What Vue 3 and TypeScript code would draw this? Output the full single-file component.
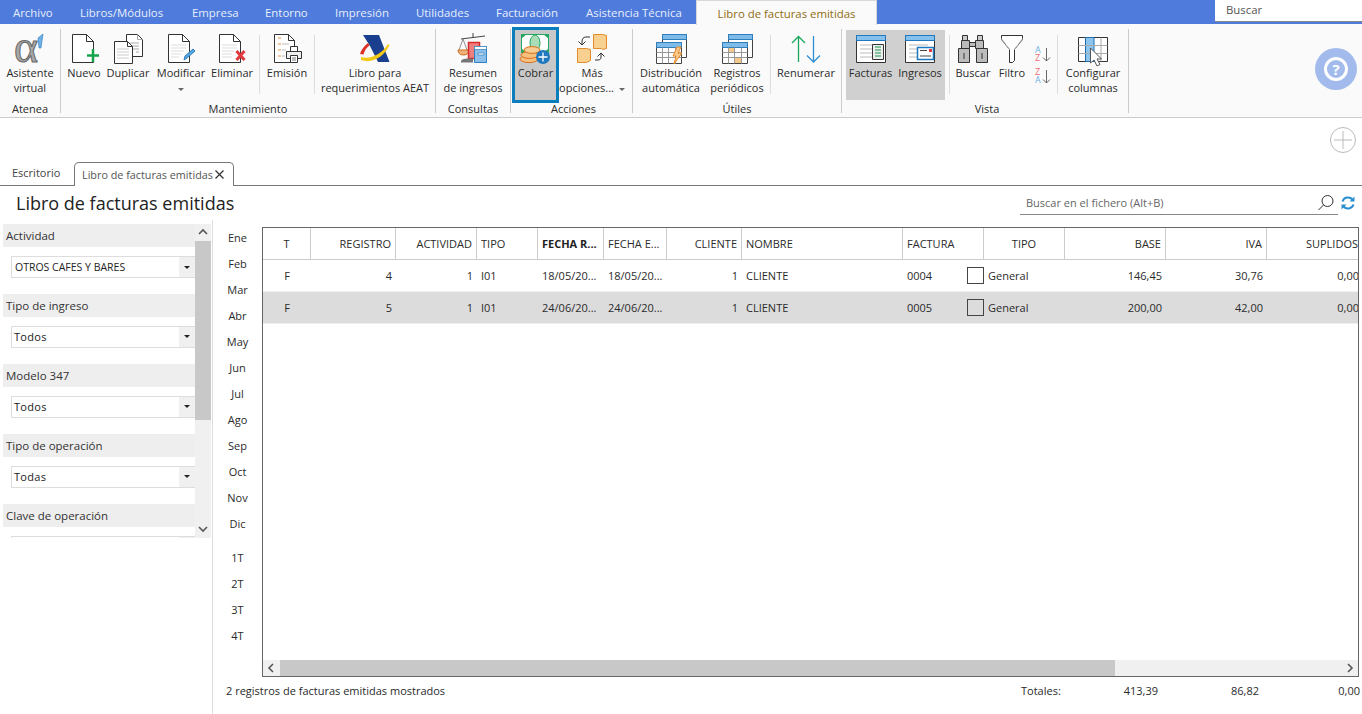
<template>
  <div class="app">
    <div class="menubar">
      <span v-for="m in menu" :key="m.label" class="menu-item" :style="{ width: m.width + 'px' }">{{ m.label }}</span>
      <span class="menu-active">Libro de facturas emitidas</span>
      <div class="global-search">Buscar</div>
    </div>

    <div class="ribbon">
      <div v-for="g in groups" :key="g.label" class="group" :style="{ width: g.width + 'px', paddingLeft: (g.pad || 0) + 'px' }">
        <div class="group-row">
          <template v-for="(b, i) in g.items" :key="i">
            <div v-if="b.sep !== undefined" class="sep" :style="{ marginLeft: b.sep + 'px' }"></div>
            <div v-else class="btn" :class="{ on: b.on, focus: b.focus }" :style="{ width: b.w + 'px' }">
              <svg v-if="b.icon === 'sort'" class="ico-sort" width="24" height="42" viewBox="0 0 24 42">
                <text x="5" y="9" class="az blue">A</text>
                <text x="5" y="17" class="az red">Z</text>
                <path d="M16.500 4v13M13 13.500l3.500 3.500 3.500-3.500" fill="none" stroke="#666" />
                <text x="5" y="31" class="az red">Z</text>
                <text x="5" y="39" class="az blue">A</text>
                <path d="M16.500 26v13M13 35.500l3.500 3.500 3.500-3.500" fill="none" stroke="#666" />
              </svg>
              <svg v-else class="ico" width="40" height="36" viewBox="0 0 40 36">
                <template v-if="b.icon === 'alpha'">
                  <text x="4" y="30" class="alpha">α</text>
                  <path d="M28 6l5-4-2 14h-2z" fill="#6fb1e6" stroke="#3d86c6" stroke-width=".7" />
                </template>
                <template v-else-if="b.icon === 'nuevo'">
                  <path d="M8.500 2.500h14l7 7v21h-21z" fill="#fff" stroke="#333" />
                  <path d="M22.500 2.500v7h7" fill="none" stroke="#333" />
                  <path d="M29 17v13M23 23.500h12" stroke="#16a34a" stroke-width="2.500" />
                </template>
                <template v-else-if="b.icon === 'duplicar'">
                  <path d="M18.500 2.500h11l5 5v17h-16z" fill="#fff" stroke="#333" />
                  <path d="M29.500 2.500v5h5M22 11h9M22 14h9M22 17h9M28 20h3" fill="none" stroke="#aaa" />
                  <path d="M6.500 9.500h13l5 5v17h-18z" fill="#fff" stroke="#333" />
                  <path d="M19.500 9.500v5h5" fill="none" stroke="#333" />
                  <path d="M9 17h12M9 20h12M9 23h12M9 26h12" stroke="#ccc" />
                </template>
                <template v-else-if="b.icon === 'modificar'">
                  <path d="M7.500 2.500h14l7 7v21h-21z" fill="#fff" stroke="#333" />
                  <path d="M21.500 2.500v7h7" fill="none" stroke="#333" />
                  <path d="M10 13h15M10 16h15M10 19h13M10 22h10M10 25h8" stroke="#ddd" />
                  <path d="M23 28l1-4 8-7 2 2-8 7z" fill="#5aa7e0" stroke="#2d7fbe" />
                </template>
                <template v-else-if="b.icon === 'eliminar'">
                  <path d="M7.500 2.500h14l7 7v21h-21z" fill="#fff" stroke="#333" />
                  <path d="M21.500 2.500v7h7" fill="none" stroke="#333" />
                  <path d="M10 13h15M10 16h15M10 19h12M10 22h10M10 25h10" stroke="#ddd" />
                  <path d="M24.500 19l8 9M32.500 19l-8 9" stroke="#e0393e" stroke-width="3" />
                </template>
                <template v-else-if="b.icon === 'emision'">
                  <path d="M7.500 2.500h14l6 6v22h-20z" fill="#fff" stroke="#333" />
                  <path d="M21.500 2.500v6h6" fill="none" stroke="#333" />
                  <path d="M11 6h3M11 12h3M11 18h3M11 24h3" stroke="#e8913a" />
                  <path d="M15 12h7M15 18h4M15 24h3" stroke="#bbb" />
                  <path d="M23.500 14.500h7v5h-7z" fill="#fff" stroke="#333" />
                  <path d="M19.500 19.500h15v7h-15z" fill="#eee" stroke="#333" />
                  <path d="M23.500 23.500h7v7h-7z" fill="#fff" stroke="#333" />
                  <path d="M25 26h4M25 28h4" stroke="#777" />
                </template>
                <template v-else-if="b.icon === 'aeat'">
                  <path d="M8 3h16l10.500 27H23L15 14z" fill="#1b3f8f" />
                  <path d="M5 22c1-4 4-8 8-11l1.500 2.500c-3 2-5 5-6 9z" fill="#e03127" />
                  <path d="M6 25c9 3 21-3 27-13l1.500 1c-5 12-18 19-28.500 15z" fill="#f4c916" />
                </template>
                <template v-else-if="b.icon === 'resumen'">
                  <path d="M8 7l24-3M20 1v5" stroke="#444" />
                  <path d="M10 7l-4 11M10 7l4 11" stroke="#777" fill="none" stroke-width=".8" />
                  <path d="M5 18h11c0 3-2 5-5.500 5S5 21 5 18z" fill="#f0b27a" stroke="#c96f22" />
                  <path d="M15.500 10.500h11v16h-11z" fill="#ee7f7f" stroke="#d52b2b" stroke-width="1.500" />
                  <path d="M8 29.500c0-2 3-3 7-3h5v4H8z" fill="#777" />
                  <path d="M21.500 14.500h12v16h-12z" fill="#8cc0ea" stroke="#2f7fbd" />
                  <path d="M21.500 14.500h12v3h-12zM25 21h6v2h-6z" fill="#fff" stroke="#2f7fbd" stroke-width=".7" />
                </template>
                <template v-else-if="b.icon === 'cobrar'">
                  <rect x="5" y="2" width="28" height="19" fill="#fff" />
                  <path d="M5 2h6l-6 5zM33 2h-6l6 5zM5 21h6l-6-5zM33 21h-6l6-5z" fill="#27a862" />
                  <rect x="5.500" y="2.500" width="27" height="18" fill="none" stroke="#27a862" />
                  <ellipse cx="19" cy="11" rx="5" ry="8" fill="#a9dcb7" stroke="#27a862" />
                  <ellipse cx="13" cy="27" rx="9" ry="3.600" fill="#f6c07f" stroke="#d9701c" />
                  <ellipse cx="13.500" cy="23" rx="8.500" ry="3.400" fill="#f6c07f" stroke="#d9701c" />
                  <ellipse cx="16" cy="18" rx="8" ry="3.400" fill="#f8cc93" stroke="#d9701c" />
                  <circle cx="27" cy="25" r="7" fill="#1f78bf" />
                  <path d="M27 20.500v9M22.500 25h9" stroke="#fff" stroke-width="1.300" />
                </template>
                <template v-else-if="b.icon === 'mas'">
                  <g transform="translate(-1 0)">
                    <path d="M22.500 2.500h9l4 1v13l-4 1-1-1h-8z" fill="#f8d08f" stroke="#e48a2a" />
                    <path d="M6.500 16.500h9l4 1v11l-4 2h-9z" fill="#f8d08f" stroke="#e48a2a" />
                    <path d="M19 5h-4c-3 0-4 2-4 5v3M7.500 9.500l3.500 3.500 3.500-3.500" fill="none" stroke="#333" />
                    <path d="M24 28h3c2 0 3-1 3-3v-4M26.500 24.500l3.500-3.500 3.500 3.500" fill="none" stroke="#333" />
                  </g>
                </template>
                <template v-else-if="b.icon === 'distrib' || b.icon === 'registros'">
                  <path d="M11.500 2.500h24v23h-24z" fill="#fff" stroke="#444" />
                  <path d="M11.500 2.500h24v5h-24z" fill="#7fbbe8" stroke="#2f7fbd" />
                  <path d="M5.500 10.500h25v21h-25z" fill="#fff" stroke="#444" />
                  <path d="M5.500 10.500h25v5h-25z" fill="#7fbbe8" stroke="#2f7fbd" />
                  <path d="M5.500 20.500h25M5.500 25.500h25M11.500 15.500v16M17.500 15.500v16M24.500 15.500v16" stroke="#999" fill="none" />
                  <template v-if="b.icon === 'distrib'">
                    <path d="M26 15l-4 9h3l-2 8 8-11h-4l3-6z" fill="#f8c98a" stroke="#e48a2a" />
                  </template>
                  <template v-else>
                    <rect x="12" y="16" width="5" height="4" fill="#f4c98a" />
                    <rect x="18" y="26" width="6" height="5" fill="#f4c98a" />
                  </template>
                </template>
                <template v-else-if="b.icon === 'renumerar'">
                  <path d="M12.500 30V5M6 11l6.500-6.500L19 11" fill="none" stroke="#1aa85a" stroke-width="1.300" />
                  <path d="M27.500 4v26M21 23.500l6.500 6.500 6.500-6.500" fill="none" stroke="#2f8fd4" stroke-width="1.300" />
                </template>
                <template v-else-if="b.icon === 'facturas' || b.icon === 'ingresos'">
                  <path d="M5.500 3.500h29v27h-29z" fill="#fff" stroke="#333" />
                  <path d="M5.500 3.500h29v5h-29z" fill="#86c0ec" stroke="#1f78bf" />
                  <path d="M9 13h19M9 17h15M9 21h15M9 25h15" stroke="#bbb" />
                  <template v-if="b.icon === 'facturas'">
                    <path d="M21.500 12.500h11v15h-11z" fill="#eee" stroke="#333" />
                    <path d="M24 15h6M24 18h6M24 21h6M24 24h6" stroke="#14964a" />
                  </template>
                  <template v-else>
                    <path d="M17.500 15.500h16v12h-16z" fill="#fff" stroke="#1f78bf" stroke-width="1.500" />
                    <path d="M20 18.500h7M20 24h11" stroke="#444" />
                    <rect x="29" y="17" width="3" height="3" fill="#e0393e" />
                  </template>
                </template>
                <template v-else-if="b.icon === 'buscar'">
                  <path d="M9.500 3.500h5v5h-5zM24.500 3.500h5v5h-5z" fill="#ccc" stroke="#333" />
                  <path d="M8.500 8.500h8v8h-8zM22.500 8.500h8v8h-8zM16.500 10.500h6v4h-6z" fill="#bbb" stroke="#333" />
                  <path d="M5.500 16.500h11v14h-11zM23.500 16.500h11v14h-11z" fill="#bbb" stroke="#333" />
                  <path d="M11 21v6M29 21v6" stroke="#333" />
                </template>
                <template v-else-if="b.icon === 'filtro'">
                  <path d="M9.500 3.500h21v4l-8 10v11l-2 2h-3v-13l-8-10z" fill="#fff" stroke="#333" />
                  <path d="M9.500 6.500l8 11M30.500 6.500l-8 11" fill="none" stroke="#bbb" />
                </template>
                <template v-else-if="b.icon === 'columnas'">
                  <path d="M5.500 5.500h29v24h-29z" fill="#fff" stroke="#333" />
                  <path d="M12.500 5.500h8.500v24h-8.500z" fill="#8ec5ee" stroke="#1f6fb0" />
                  <path d="M5.500 13.500h29M5.500 21.500h29M28 5.500v24" stroke="#aaa" fill="none" />
                  <path d="M17.500 16v15l3.500-3 3 6 3-1.500-3-5.500h4.500z" fill="#fff" stroke="#555" />
                </template>
              </svg>
              <span class="btn-label">{{ b.lines?.[0] }}</span>
              <span class="btn-label">{{ b.lines?.[1] }}<i v-if="b.menu" class="caret" :class="{ solo: !b.lines?.[1] }"></i></span>
            </div>
          </template>
        </div>
        <div class="group-label">{{ g.label }}</div>
      </div>
      <div class="help"><span>?</span></div>
    </div>

    <div class="addbar">
      <svg width="28" height="28" viewBox="0 0 28 28">
        <circle cx="14" cy="14" r="12.500" fill="#fff" stroke="#bbb" />
        <path d="M14 5v18M5 14h18" stroke="#bbb" />
      </svg>
    </div>

    <div class="tabs">
      <span class="tab-plain">Escritorio</span>
      <span class="tab-open">Libro de facturas emitidas
        <svg width="9" height="9" viewBox="0 0 9 9"><path d="M.5.500l8 8M8.500.500l-8 8" stroke="#333" stroke-width="1.200" /></svg>
      </span>
    </div>

    <div class="title-row">
      <h1>Libro de facturas emitidas</h1>
      <div class="file-search">
        <span>Buscar en el fichero (Alt+B)</span>
        <svg width="18" height="18" viewBox="0 0 18 18"><circle cx="10.500" cy="7" r="5.500" fill="none" stroke="#333" /><path d="M6.500 11l-5 5" stroke="#333" /></svg>
      </div>
      <svg class="refresh" width="16" height="16" viewBox="0 0 16 16">
        <path d="M2.500 6.500A5.800 5.800 0 0 1 12.500 4.500M13.500 9.500A5.800 5.800 0 0 1 3.500 11.500" fill="none" stroke="#2a8fd0" stroke-width="2" />
        <path d="M14.500 1.500v5h-5zM1.500 14.500v-5h5z" fill="#2a8fd0" />
      </svg>
    </div>

    <div class="body">
      <div class="side">
        <div class="filters">
          <div class="filter-list">
            <div v-for="f in filters" :key="f.label" class="filter">
              <div class="filter-head">{{ f.label }}</div>
              <div class="select" :class="{ upper: f.value === 'OTROS CAFES Y BARES' }">
                <span>{{ f.value }}</span>
                <i class="select-btn"><b></b></i>
              </div>
            </div>
          </div>
          <div class="vscroll">
            <svg width="16" height="17" viewBox="0 0 16 17"><path d="M4 10l4-4 4 4" fill="none" stroke="#555" stroke-width="1.600" /></svg>
            <div class="vthumb"></div>
            <div class="vtrack"></div>
            <svg width="16" height="17" viewBox="0 0 16 17"><path d="M4 6l4 4 4-4" fill="none" stroke="#555" stroke-width="1.600" /></svg>
          </div>
        </div>
      </div>

      <div class="main">
        <div class="main-top">
          <div class="months">
            <span v-for="m in months" :key="m">{{ m }}</span>
            <span v-for="q in quarters" :key="q" :class="{ first: q === '1T' }">{{ q }}</span>
          </div>
          <div class="grid">
            <div class="grid-inner">
              <table>
                <colgroup>
                  <col v-for="c in columns" :key="c.name + c.w" :style="{ width: c.w + 'px' }" />
                </colgroup>
                <thead>
                  <tr>
                    <th v-for="c in columns" :key="c.name + c.w" :class="[c.align, { bold: c.bold }]">{{ c.name }}</th>
                  </tr>
                </thead>
                <tbody>
                  <tr v-for="(r, i) in rows" :key="r.reg" :class="{ sel: i === 1 }">
                    <td class="center">F</td>
                    <td class="right">{{ r.reg }}</td>
                    <td class="right">1</td>
                    <td>I01</td>
                    <td>{{ r.fecha }}</td>
                    <td>{{ r.fecha }}</td>
                    <td class="right">1</td>
                    <td>CLIENTE</td>
                    <td class="with-check"><span>{{ r.factura }}</span><i class="check"></i></td>
                    <td>General</td>
                    <td class="right">{{ r.base }}</td>
                    <td class="right">{{ r.iva }}</td>
                    <td class="right">0,00</td>
                  </tr>
                </tbody>
              </table>
            </div>
            <div class="hscroll">
              <svg width="17" height="16" viewBox="0 0 17 16"><path d="M10 4L6 8l4 4" fill="none" stroke="#555" stroke-width="1.600" /></svg>
              <div class="hthumb"></div>
              <div class="htrack"></div>
              <svg width="17" height="16" viewBox="0 0 17 16"><path d="M7 4l4 4-4 4" fill="none" stroke="#555" stroke-width="1.600" /></svg>
            </div>
          </div>
        </div>
        <div class="foot">
          <span class="count">2 registros de facturas emitidas mostrados</span>
          <span class="tot-label">Totales:</span>
          <span class="tot t1">413,39</span>
          <span class="tot t2">86,82</span>
          <span class="tot t3">0,00</span>
        </div>
      </div>
    </div>
  </div>
</template>

<script setup lang="ts">
interface RibbonItem {
  sep?: number;
  icon?: string;
  lines?: string[];
  w?: number;
  on?: boolean;
  focus?: boolean;
  menu?: boolean;
}

const menu = [
  { label: 'Archivo', width: 67 },
  { label: 'Libros/Módulos', width: 112 },
  { label: 'Empresa', width: 73 },
  { label: 'Entorno', width: 70 },
  { label: 'Impresión', width: 81 },
  { label: 'Utilidades', width: 80 },
  { label: 'Facturación', width: 90 },
  { label: 'Asistencia Técnica', width: 110 },
];

// sep holds the gap in px before the divider line
const groups: { label: string; width: number; pad?: number; items: RibbonItem[] }[] = [
  { label: 'Atenea', width: 61, items: [{ icon: 'alpha', lines: ['Asistente', 'virtual'], w: 60 }] },
  {
    label: 'Mantenimiento',
    width: 375,
    items: [
      { icon: 'nuevo', lines: ['Nuevo', ''], w: 46 },
      { icon: 'duplicar', lines: ['Duplicar', ''], w: 42 },
      { icon: 'modificar', lines: ['Modificar', ''], w: 64, menu: true },
      { icon: 'eliminar', lines: ['Eliminar', ''], w: 38 },
      { sep: 8 },
      { icon: 'emision', lines: ['Emisión', ''], w: 54 },
      { sep: 0 },
      { icon: 'aeat', lines: ['Libro para', 'requerimientos AEAT'], w: 120 },
    ],
  },
  { label: 'Consultas', width: 75, items: [{ icon: 'resumen', lines: ['Resumen', 'de ingresos'], w: 74 }] },
  {
    label: 'Acciones',
    width: 122,
    pad: 4,
    items: [
      { icon: 'cobrar', lines: ['Cobrar', ''], w: 41, focus: true },
      { icon: 'mas', lines: ['Más', 'opciones...'], w: 72, menu: true },
    ],
  },
  {
    label: 'Útiles',
    width: 209,
    items: [
      { icon: 'distrib', lines: ['Distribución', 'automática'], w: 76 },
      { icon: 'registros', lines: ['Registros', 'periódicos'], w: 56 },
      { sep: 5 },
      { icon: 'renumerar', lines: ['Renumerar', ''], w: 70 },
    ],
  },
  {
    label: 'Vista',
    width: 287,
    pad: 4,
    items: [
      { icon: 'facturas', lines: ['Facturas', ''], w: 49, on: true },
      { icon: 'ingresos', lines: ['Ingresos', ''], w: 50, on: true },
      { sep: 4 },
      { icon: 'buscar', lines: ['Buscar', ''], w: 46 },
      { icon: 'filtro', lines: ['Filtro', ''], w: 32 },
      { icon: 'sort', lines: ['', ''], w: 27 },
      { sep: 2 },
      { icon: 'columnas', lines: ['Configurar', 'columnas'], w: 70 },
    ],
  },
];

const filters = [
  { label: 'Actividad', value: 'OTROS CAFES Y BARES' },
  { label: 'Tipo de ingreso', value: 'Todos' },
  { label: 'Modelo 347', value: 'Todos' },
  { label: 'Tipo de operación', value: 'Todas' },
  { label: 'Clave de operación', value: '' },
];

const months = ['Ene', 'Feb', 'Mar', 'Abr', 'May', 'Jun', 'Jul', 'Ago', 'Sep', 'Oct', 'Nov', 'Dic'];
const quarters = ['1T', '2T', '3T', '4T'];

const columns = [
  { name: 'T', w: 48, align: 'center' },
  { name: 'REGISTRO', w: 85, align: 'right' },
  { name: 'ACTIVIDAD', w: 81, align: 'right' },
  { name: 'TIPO', w: 61, align: 'left' },
  { name: 'FECHA R...', w: 66, align: 'left', bold: true },
  { name: 'FECHA E...', w: 63, align: 'left' },
  { name: 'CLIENTE', w: 75, align: 'right' },
  { name: 'NOMBRE', w: 161, align: 'left' },
  { name: 'FACTURA', w: 81, align: 'left' },
  { name: 'TIPO', w: 81, align: 'center' },
  { name: 'BASE', w: 101, align: 'right' },
  { name: 'IVA', w: 101, align: 'right' },
  { name: 'SUPLIDOS', w: 96, align: 'right' },
];

const rows = [
  { reg: 4, fecha: '18/05/20...', factura: '0004', base: '146,45', iva: '30,76' },
  { reg: 5, fecha: '24/06/20...', factura: '0005', base: '200,00', iva: '42,00' },
];
</script>

<style>
html, body {
  margin: 0;
  background: #fff;
}
</style>

<style scoped>
.app {
  width: 1362px;
  height: 714px;
  overflow: hidden;
  display: flex;
  flex-direction: column;
  font-family: "Open Sans", "Noto Sans", sans-serif;
  font-size: 11px;
  color: #2b2b2b;
  background: #fff;
}

.menubar {
  flex: none;
  height: 24px;
  display: flex;
  align-items: center;
  padding-left: 13px;
  background: #4e7bdc;
  color: #e8eefb;
  font-size: 11.400px;
}
.menu-item {
  display: block;
  white-space: nowrap;
}
.menu-active {
  width: 181px;
  height: 25px;
  box-sizing: border-box;
  align-self: flex-start;
  text-align: center;
  line-height: 25px;
  background: #fafafa;
  border: 1px solid #d8d8d8;
  border-bottom: none;
  color: #8f6c12;
  position: relative;
}
.global-search {
  margin-left: auto;
  width: 147px;
  height: 22px;
  align-self: flex-start;
  box-sizing: border-box;
  padding-left: 11px;
  line-height: 20px;
  background: #fff;
  border-bottom: 1px solid #888;
  color: #555;
}

.ribbon {
  flex: none;
  height: 94px;
  box-sizing: border-box;
  display: flex;
  background: #fafafa;
  border-bottom: 1px solid #ccc;
}
.group {
  box-sizing: border-box;
  height: 84px;
  margin-top: 5px;
  border-right: 1px solid #ccc;
  display: flex;
  flex-direction: column;
}
.group-row {
  flex: none;
  height: 70px;
  margin-top: 1px;
  display: flex;
}
.group-label {
  text-align: center;
  line-height: 15px;
  margin-top: 1px;
}
.sep {
  width: 1px;
  height: 59px;
  margin-top: 5px;
  background: #ddd;
}
.btn {
  flex: none;
  height: 70px;
  display: flex;
  flex-direction: column;
  align-items: center;
  white-space: nowrap;
}
.btn.on {
  background: #d0d0d0;
}
.btn.focus {
  background: #c8c8c8;
  outline: 3px solid #0a7dbd;
}
.ico {
  flex: none;
  margin-top: 2px;
  margin-bottom: -3px;
  overflow: visible;
}
.ico-sort {
  flex: none;
  margin-top: 14px;
  margin-bottom: -23px;
  overflow: visible;
}
.alpha {
  font-family: "Liberation Serif", serif;
  font-size: 46px;
  fill: #a8a8a8;
  stroke: #666;
  stroke-width: 1px;
}
.az {
  font-family: "Open Sans", sans-serif;
  font-size: 9px;
}
.az.blue {
  fill: #6fb1e6;
}
.az.red {
  fill: #ec6c72;
}
.btn-label {
  height: 15px;
  line-height: 15px;
}
.caret {
  display: inline-block;
  width: 0;
  height: 0;
  margin-left: 5px;
  vertical-align: middle;
  border: 3px solid transparent;
  border-top: 3px solid #666;
  border-bottom: none;
}
.caret.solo {
  margin-left: 0;
}

.help {
  flex: none;
  width: 42px;
  height: 42px;
  margin: 24px 0 0 186px;
  border-radius: 50%;
  background: #a3bbec;
  display: flex;
  align-items: center;
  justify-content: center;
}
.help span {
  width: 24px;
  height: 24px;
  box-sizing: border-box;
  border: 3px solid #fff;
  border-radius: 50%;
  color: #fff;
  font-weight: 700;
  font-size: 15px;
  line-height: 18px;
  text-align: center;
}

.addbar {
  flex: none;
  height: 42px;
  box-sizing: border-box;
  padding: 8px 5px 0 0;
  display: flex;
  justify-content: flex-end;
}

.tabs {
  flex: none;
  height: 26px;
  box-sizing: border-box;
  display: flex;
  align-items: flex-end;
  border-bottom: 1px solid #777;
}
.tab-plain {
  width: 74px;
  padding-left: 12px;
  box-sizing: border-box;
  line-height: 24px;
  color: #444;
}
.tab-open {
  width: 160px;
  height: 24px;
  box-sizing: border-box;
  margin-bottom: -1px;
  padding-left: 7px;
  display: flex;
  align-items: center;
  gap: 2px;
  white-space: nowrap;
  line-height: 21px;
  font-size: 10.800px;
  color: #555;
  background: #fff;
  border: 1px solid #777;
  border-bottom: none;
  border-radius: 5px 5px 0 0;
}

.title-row {
  flex: none;
  height: 34px;
  display: flex;
  align-items: center;
  padding: 0 6px 0 16px;
}
h1 {
  margin: 0;
  font-size: 18px;
  font-weight: 400;
  color: #222;
  flex: 1;
}
.file-search {
  width: 318px;
  height: 24px;
  box-sizing: border-box;
  padding: 0 3px 0 6px;
  display: flex;
  align-items: center;
  justify-content: space-between;
  border-bottom: 1px solid #888;
  color: #666;
}
.refresh {
  margin-left: 2px;
}

.body {
  flex: 1;
  min-height: 0;
  display: flex;
}
.side {
  flex: none;
  width: 213px;
  box-sizing: border-box;
  border-right: 1px solid #ddd;
  padding: 4px 0 0 3px;
}
.filters {
  height: 314px;
  display: flex;
  overflow: hidden;
}
.filter-list {
  width: 192px;
  overflow: hidden;
}
.filter {
  height: 70px;
}
.filter-head {
  height: 23px;
  box-sizing: border-box;
  padding-left: 3px;
  line-height: 23px;
  background: #eee;
  font-size: 11.500px;
  color: #333;
}
.select {
  height: 22px;
  box-sizing: border-box;
  margin: 9px 0 0 8px;
  padding: 0 0 1px 2px;
  display: flex;
  align-items: center;
  justify-content: space-between;
  border: 1px solid #ddd;
  border-right: none;
  font-size: 11px;
  letter-spacing: 0.3px;
  color: #222;
}
.select.upper {
  letter-spacing: 0;
  font-size: 10.500px;
  padding: 0 0 0 3px;
}
.select-btn {
  width: 16px;
  height: 20px;
  background: #f0f0f0;
  display: flex;
  align-items: center;
  justify-content: center;
}
.select-btn b {
  border: 3px solid transparent;
  border-top: 3px solid #222;
  border-bottom: none;
}
.vscroll {
  width: 16px;
  display: flex;
  flex-direction: column;
  background: #f0f0f0;
}
.vthumb {
  height: 179px;
  background: #c8c8c8;
}
.vtrack {
  flex: 1;
}

.main {
  flex: 1;
  min-width: 0;
  display: flex;
  flex-direction: column;
}
.main-top {
  flex: none;
  height: 457px;
  display: flex;
}
.months {
  flex: none;
  width: 49px;
  padding-top: 5px;
  display: flex;
  flex-direction: column;
  align-items: center;
}
.months span {
  height: 26px;
  line-height: 26px;
}
.months .first {
  margin-top: 8px;
}
.grid {
  flex: none;
  width: 1097px;
  height: 450px;
  margin-top: 7px;
  box-sizing: border-box;
  border: 1px solid #666;
  display: flex;
  flex-direction: column;
}
.grid-inner {
  flex: 1;
  min-height: 0;
  overflow: hidden;
}
table {
  width: 1100px;
  table-layout: fixed;
  border-collapse: separate;
  border-spacing: 0;
}
th {
  height: 31px;
  box-sizing: content-box;
  padding: 0 4px;
  font-weight: 400;
  font-size: 11px;
  white-space: nowrap;
  overflow: hidden;
  border-bottom: 1px solid #ccc;
  border-right: 1px solid #ccc;
  text-align: left;
}
th.bold {
  font-weight: 700;
  color: #222;
  padding-right: 0;
}
th.center, td.center {
  text-align: center;
}
th.right, td.right {
  text-align: right;
}
td {
  height: 31px;
  padding: 0 4px;
  white-space: nowrap;
  overflow: hidden;
  border-bottom: 1px solid #f0f0f0;
}
tr.sel td {
  background: #dcdcdc;
}
.with-check {
  position: relative;
}
.check {
  position: absolute;
  right: 0;
  top: 7px;
  width: 15px;
  height: 15px;
  border: 1px solid #444;
}
.hscroll {
  flex: none;
  height: 16px;
  display: flex;
  background: #f0f0f0;
}
.hthumb {
  width: 835px;
  background: #c8c8c8;
}
.htrack {
  flex: 1;
}
.foot {
  flex: none;
  display: flex;
  align-items: center;
  height: 26px;
  padding-left: 13px;
}
.count {
  width: 795px;
}
.tot-label {
  width: 60px;
}
.tot {
  text-align: right;
}
.t1 {
  width: 77px;
}
.t2 {
  width: 101px;
}
.t3 {
  width: 101px;
}
</style>
